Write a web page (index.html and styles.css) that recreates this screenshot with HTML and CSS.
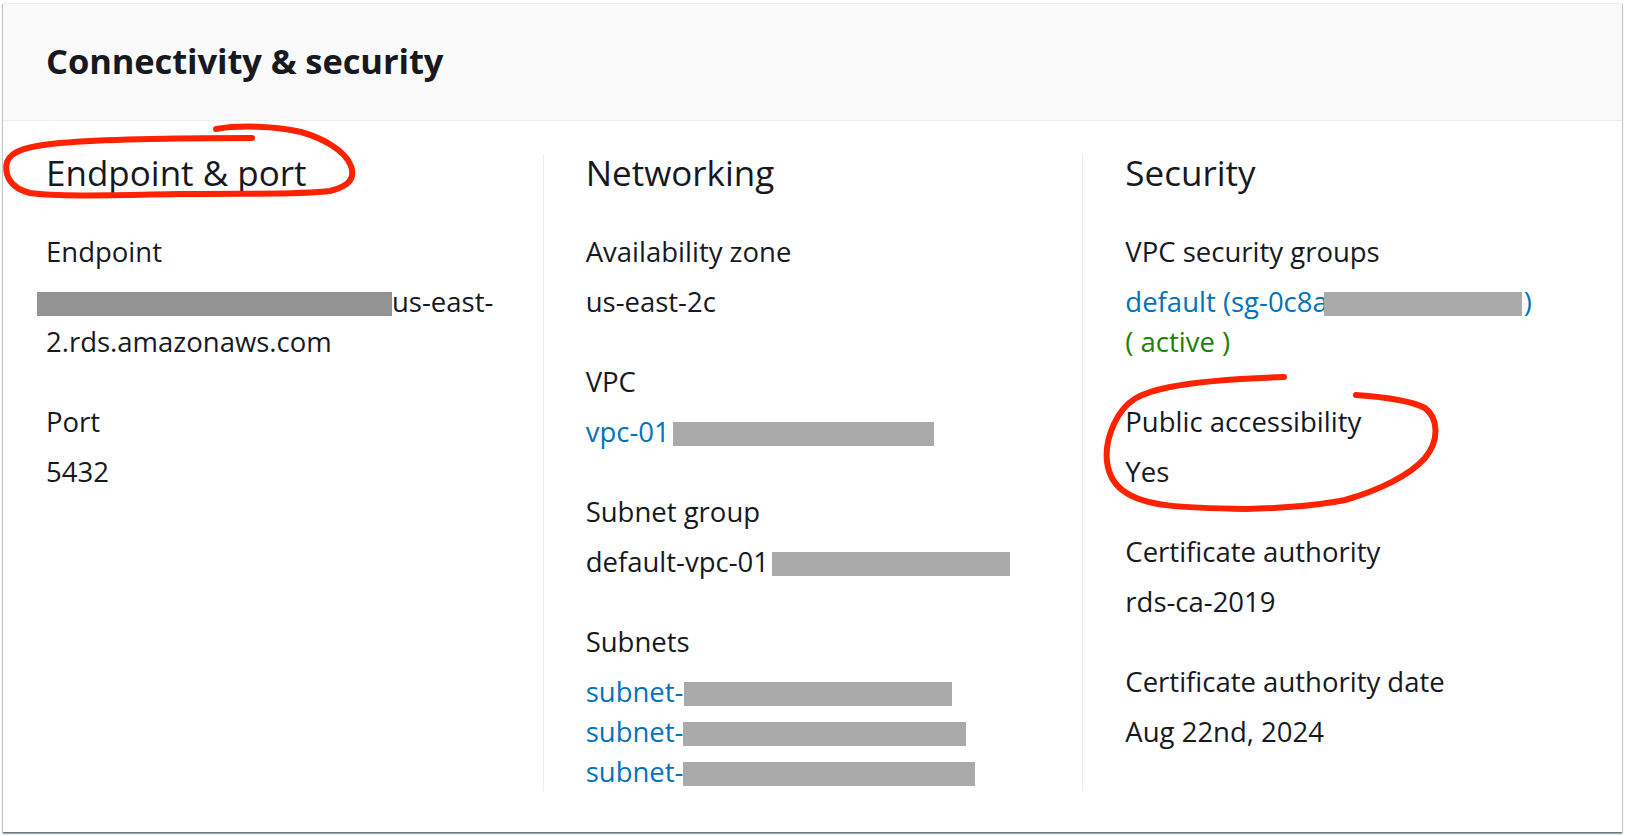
FILE: index.html
```html
<!DOCTYPE html>
<html lang="en">
<head>
<meta charset="utf-8">
<title>Connectivity &amp; security</title>
<link rel="stylesheet" href="styles.css">
</head>
<body>
<div class="card">
  <div class="card-header">
    <h2 class="card-title">Connectivity &amp; security</h2>
  </div>
  <div class="card-body">
    <section class="col">
      <h3 class="col-title">Endpoint &amp; port</h3>
      <div class="kv">
        <div class="label">Endpoint</div>
        <div class="value"><span class="redact dark r-endpoint"></span>us-east-<br>2.rds.amazonaws.com</div>
      </div>
      <div class="kv">
        <div class="label">Port</div>
        <div class="value">5432</div>
      </div>
    </section>
    <section class="col">
      <h3 class="col-title">Networking</h3>
      <div class="kv">
        <div class="label">Availability zone</div>
        <div class="value">us-east-2c</div>
      </div>
      <div class="kv">
        <div class="label">VPC</div>
        <div class="value"><a class="link" href="#">vpc-01</a><span class="redact r-vpc"></span></div>
      </div>
      <div class="kv">
        <div class="label">Subnet group</div>
        <div class="value">default-vpc-01<span class="redact r-group"></span></div>
      </div>
      <div class="kv">
        <div class="label">Subnets</div>
        <div class="value">
          <div><a class="link" href="#">subnet-</a><span class="redact r-sub1"></span></div>
          <div><a class="link" href="#">subnet-</a><span class="redact r-sub2"></span></div>
          <div><a class="link" href="#">subnet-</a><span class="redact r-sub3"></span></div>
        </div>
      </div>
    </section>
    <section class="col">
      <h3 class="col-title">Security</h3>
      <div class="kv">
        <div class="label">VPC security groups</div>
        <div class="value"><a class="link" href="#">default (sg-0c8a</a><span class="redact r-sg"></span><a class="link" href="#">)</a><br><span class="active">( active )</span></div>
      </div>
      <div class="kv">
        <div class="label">Public accessibility</div>
        <div class="value">Yes</div>
      </div>
      <div class="kv">
        <div class="label">Certificate authority</div>
        <div class="value">rds-ca-2019</div>
      </div>
      <div class="kv">
        <div class="label">Certificate authority date</div>
        <div class="value">Aug 22nd, 2024</div>
      </div>
    </section>
  </div>
</div>
<svg class="annotations" width="1628" height="836" viewBox="0 0 1628 836" xmlns="http://www.w3.org/2000/svg">
  <path d="M216 129 C 240 125, 275 126, 301 132 C 322 138, 345 150, 351 166 C 355 178, 350 186, 330 191 C 300 195, 250 193, 180 194 C 120 195, 60 197, 30 193 C 10 188, 4 175, 7 162 C 11 150, 30 146, 60 143 C 110 139, 180 138, 252 138" />
  <path d="M1284 377 C 1250 378, 1205 380, 1170 387 C 1140 393, 1125 400, 1114 424 C 1102 450, 1104 478, 1125 492 C 1145 506, 1180 508, 1246 509 C 1290 508, 1320 505, 1345 500 C 1380 490, 1410 475, 1425 458 C 1440 440, 1438 418, 1425 408 C 1410 400, 1385 397, 1356 395" />
</svg>
</body>
</html>
```

FILE: styles.css
```css
html, body {
  margin: 0;
  padding: 0;
  background: #ffffff;
}

body {
  position: relative;
  width: 1628px;
  height: 836px;
  padding: 3px 6px 0 3px;
  box-sizing: border-box;
  font-family: "Open Sans", "Noto Sans", "Liberation Sans", sans-serif;
  color: #16191f;
}

.card {
  height: 829px;
  box-sizing: border-box;
  background: #ffffff;
  border-top: 1px solid #eaeded;
  box-shadow: 0 2px 1px 0 rgba(0, 28, 36, 0.35), 1px 1px 1px 0 rgba(0, 28, 36, 0.2), -1px 1px 1px 0 rgba(0, 28, 36, 0.2);
  display: flex;
  flex-direction: column;
}

.card-header {
  height: 117px;
  box-sizing: border-box;
  background: #fafafa;
  border-bottom: 1px solid #eaeded;
  padding: 0 43px 2px 43px;
  display: flex;
  align-items: center;
}

.card-title {
  margin: 0;
  font-size: 34.5px;
  font-weight: 700;
  line-height: 46px;
  letter-spacing: -0.1px;
}

.card-body {
  display: grid;
  grid-template-columns: repeat(3, 1fr);
  padding: 33px 0 0 0;
}

.col {
  border-left: 1px solid #eaeded;
  padding-left: 42px;
  height: 637px;
}

.col:first-child {
  border-left-color: transparent;
}

.col-title {
  margin: -2px 0 38px 0;
  font-size: 35px;
  font-weight: 400;
  line-height: 42px;
}

.kv {
  margin-bottom: 40px;
}

.label {
  font-size: 27.5px;
  line-height: 40px;
}

.value {
  margin-top: 10px;
  font-size: 27.5px;
  line-height: 40px;
}

.link {
  color: #0073bb;
  text-decoration: none;
}

.active {
  color: #1d8102;
}

.redact {
  display: inline-block;
  height: 24px;
  vertical-align: -4px;
  background: #aaaaaa;
}

.redact.dark {
  background: #939393;
}

.r-endpoint {
  width: 355px;
  margin-left: -9px;
}

.r-vpc {
  width: 261px;
  margin-left: 3px;
}

.r-group {
  width: 238px;
  margin-left: 3px;
}

.r-sub1 {
  width: 268px;
  margin-left: 1px;
}

.r-sub2 {
  width: 283px;
}

.r-sub3 {
  width: 292px;
}

.r-sg {
  width: 198px;
  margin-left: -4px;
  margin-right: 2px;
}

.annotations {
  position: absolute;
  left: 0;
  top: 0;
  pointer-events: none;
}

.annotations path {
  fill: none;
  stroke: #ff2200;
  stroke-width: 6;
  stroke-linecap: round;
  stroke-linejoin: round;
}
```
